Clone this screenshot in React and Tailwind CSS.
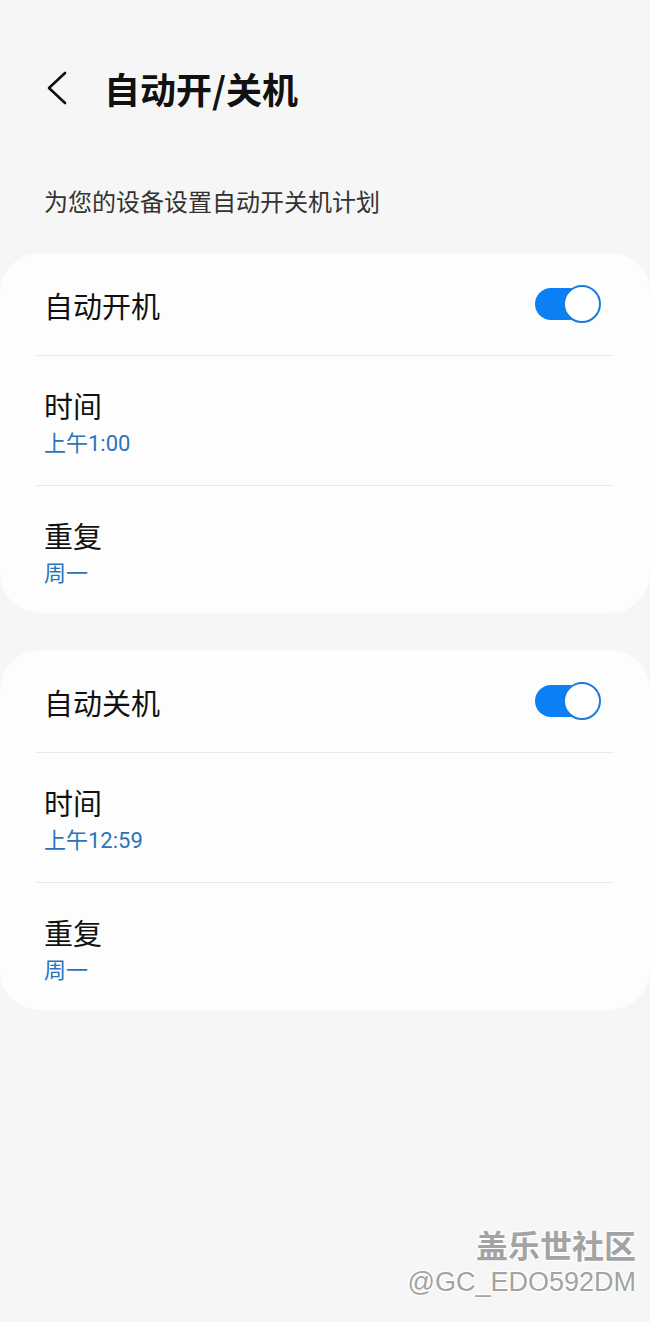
import React from "react";

const FONT = { fontFamily: '"Noto Sans CJK SC", "Noto Sans", sans-serif' };
const NUMFONT = { fontFamily: 'Roboto, "Noto Sans CJK SC", sans-serif' };

function Toggle() {
  return (
    <div className="relative w-[66px] h-[38px] flex items-center">
      <div className="absolute left-0 top-[3px] w-[50px] h-[32px] rounded-full bg-[#0b7ff3]" />
      <div className="absolute right-0 top-0 w-[38px] h-[38px] rounded-full bg-white border-[2px] border-[#1a7ae0]" />
    </div>
  );
}

function Divider() {
  return <div className="h-px bg-[#e9e9e9] mx-[36px]" />;
}

function SubRow({ title, value, h }) {
  return (
    <div className={`flex flex-col px-[44px] pt-[31px] ${h}`}>
      <div className="text-[29px] leading-[36px] text-[#111]" style={FONT}>{title}</div>
      <div className="mt-[7px] text-[22px] leading-[28px] text-[#2a74bb]" style={NUMFONT}>{value}</div>
    </div>
  );
}

function Card({ title, time }) {
  return (
    <div className="bg-[#fdfdfd] rounded-[40px] w-full">
      <div className="h-[102px] flex items-center justify-between pl-[44px] pr-[49px]">
        <div className="text-[29px] leading-[36px] text-[#111] pt-[2px]" style={FONT}>{title}</div>
        <Toggle />
      </div>
      <Divider />
      <SubRow title="时间" value={time} h="h-[129px]" />
      <Divider />
      <SubRow title="重复" value="周一" h="h-[127px]" />
    </div>
  );
}

export default function App() {
  return (
    <div className="relative w-[650px] h-[1322px] bg-[#f6f6f6] overflow-hidden" style={FONT}>
      <div className="pt-[60px]">
        <div className="h-[56px] flex items-center">
          <div className="w-[104px] flex items-center pl-[45px]">
            <svg width="24" height="34" viewBox="0 0 24 34" fill="none">
              <path d="M20 2 L4 17 L20 32" stroke="#111" strokeWidth="2.6" strokeLinecap="round" strokeLinejoin="round" />
            </svg>
          </div>
          <div className="text-[36px] leading-[44px] font-bold text-[#111]" style={FONT}>自动开/关机</div>
        </div>
        <div className="mt-[69px] pl-[44px] text-[24px] leading-[32px] text-[#333]" style={FONT}>
          为您的设备设置自动开关机计划
        </div>
        <div className="mt-[36px]">
          <Card title="自动开机" time="上午1:00" />
        </div>
        <div className="mt-[37px]">
          <Card title="自动关机" time="上午12:59" />
        </div>
      </div>
      <div
        className="absolute right-[14px] bottom-[22px] flex flex-col items-end text-[#a3a3a3]"
        style={{ textShadow: "1px 1px 0 #ffffff, -1px -1px 0 #ffffff, 1px -1px 0 #ffffff, -1px 1px 0 #ffffff" }}
      >
        <div className="text-[32px] leading-[40px] font-bold" style={FONT}>盖乐世社区</div>
        <div className="text-[27px] leading-[36px]" style={{ fontFamily: '"Liberation Sans", Arial, sans-serif' }}>@GC_EDO592DM</div>
      </div>
    </div>
  );
}
